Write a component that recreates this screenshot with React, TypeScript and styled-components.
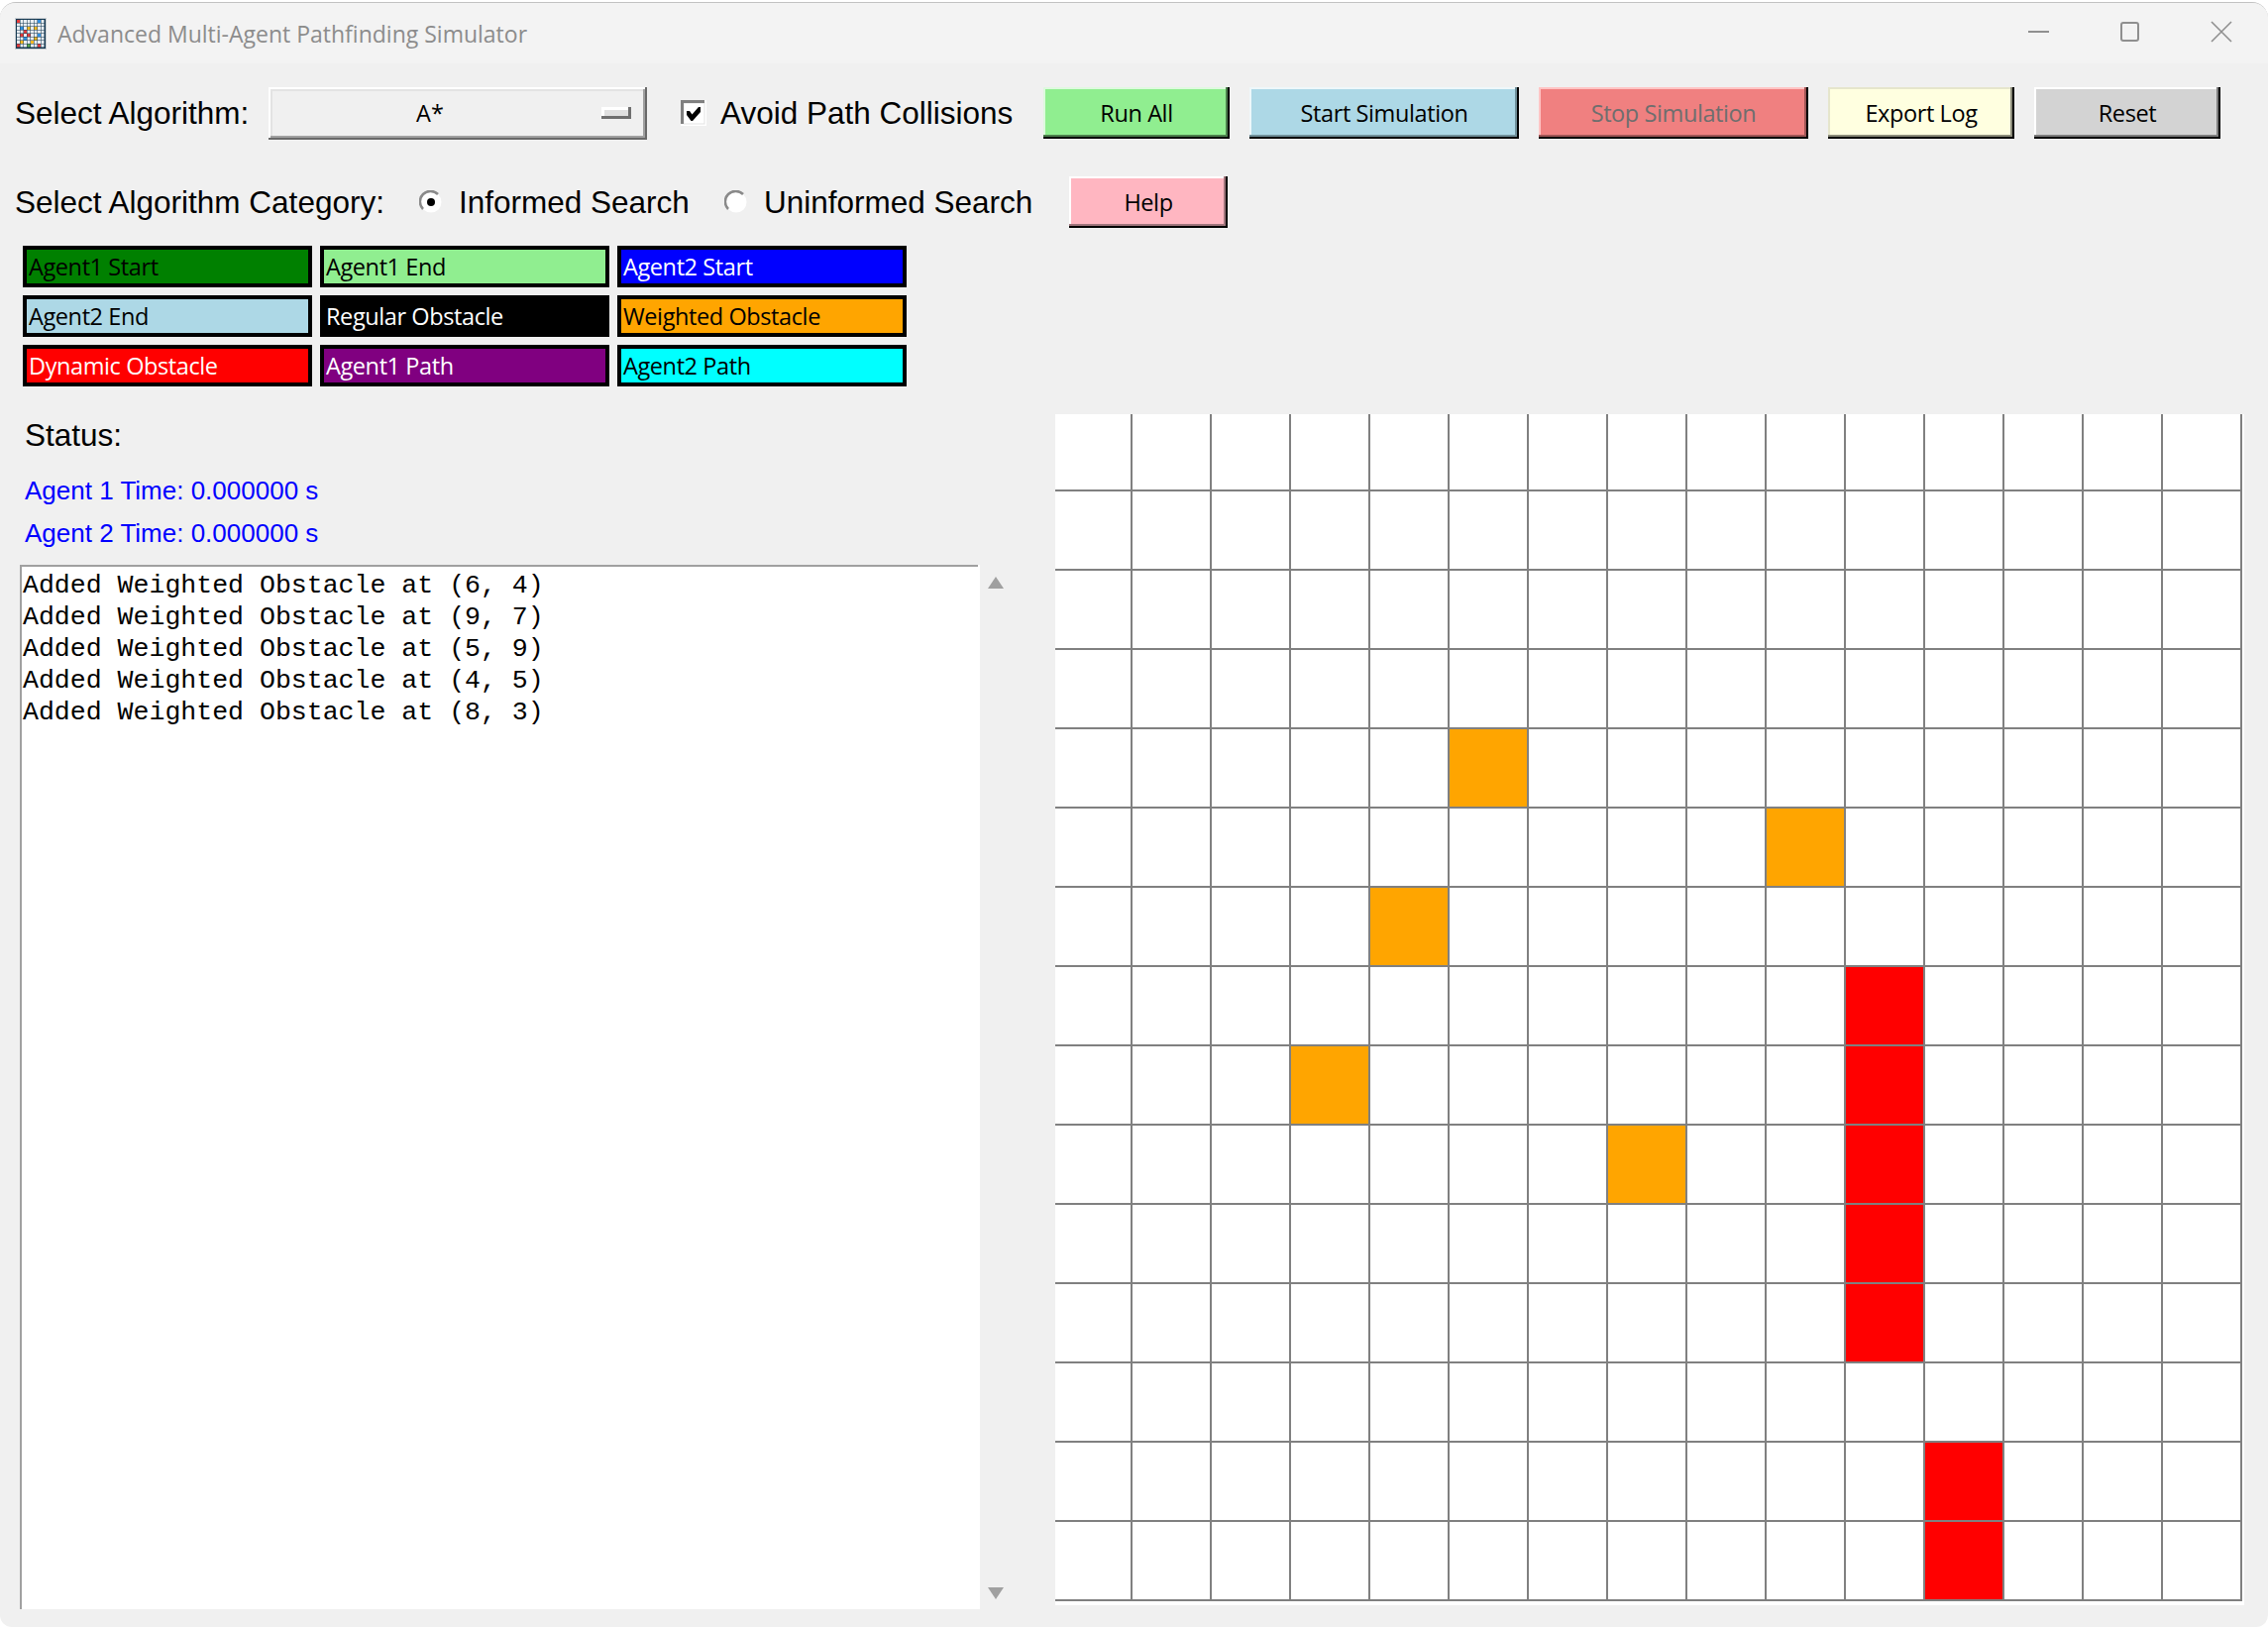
import React from "react";
import styled, { createGlobalStyle } from "styled-components";

const Global = createGlobalStyle`
  html, body { margin: 0; padding: 0; background: #fff; }
  * { box-sizing: border-box; }
`;

const Win = styled.div`
  width: 2289px;
  height: 1640px;
  margin-top: 2px;
  border-top: 1px solid #c2c2c2;
  border-radius: 16px 16px 12px 12px;
  overflow: hidden;
  background: #f0f0f0;
  display: flex;
  flex-direction: column;
`;
const TitleBar = styled.div`
  height: 61px;
  flex: none;
  background: #f3f3f3;
  display: flex;
  align-items: center;
  padding: 0 1px 0 15px;
`;
const AppIcon = styled.svg`
  width: 32px;
  height: 32px;
  flex: none;
`;
const TitleText = styled.div`
  margin-left: 11px;
  font: 23px "Open Sans", sans-serif;
  color: #8c8c8c;
`;
const Controls = styled.div`
  margin-left: auto;
  margin-bottom: 4px;
  display: flex;
`;
const Ctrl = styled.div`
  width: 92px;
  height: 40px;
  display: flex;
  align-items: center;
  justify-content: center;
`;
const Row = styled.div<{ $top: number }>`
  margin-top: ${(p) => p.$top}px;
  height: 52px;
  padding-left: 15px;
  flex: none;
  display: flex;
  align-items: center;
`;
const Label = styled.div<{ $w: number }>`
  width: ${(p) => p.$w}px;
  flex: none;
  font: 31.5px "Liberation Sans", Arial, sans-serif;
  color: #000;
  white-space: nowrap;
`;
const Combo = styled.div`
  width: 382px;
  height: 53px;
  margin-right: 34px;
  flex: none;
  background: #f0f0f0;
  box-shadow: inset -2px -2px 0 #696969, inset 2px 2px 0 #fff, inset -4px -4px 0 #a0a0a0, inset 4px 4px 0 #e3e3e3;
  display: flex;
  align-items: center;
  padding-right: 16px;
`;
const ComboValue = styled.div`
  flex: 1;
  padding-right: 10px;
  text-align: center;
  font: 23.5px "Open Sans", sans-serif;
  color: #000;
`;
const ComboMark = styled.div`
  width: 30px;
  height: 12px;
  background: #e0e0e0;
  box-shadow: inset -3px -3px 0 #6f6f6f, inset 3px 3px 0 #fff;
`;
const Check = styled.svg`
  width: 26px;
  height: 26px;
  flex: none;
  margin-right: 14px;
`;
const Radio = styled.svg`
  width: 24px;
  height: 24px;
  flex: none;
  margin-right: 16px;
`;
const Btn = styled.div<{ $w: number; $bg: string; $hi: string; $lo: string; $off?: boolean }>`
  width: ${(p) => p.$w}px;
  height: 52px;
  flex: none;
  margin-right: 20px;
  background: ${(p) => p.$bg};
  box-shadow: inset -2px -2px 0 #000, inset -4px -4px 0 ${(p) => p.$lo}, inset 2px 2px 0 ${(p) => p.$hi};
  display: flex;
  align-items: center;
  justify-content: center;
  font: 23.5px "Open Sans", sans-serif;
  letter-spacing: -0.4px;
  color: ${(p) => (p.$off ? "#6e6e6e" : "#000")};
`;
const Legend = styled.div`
  margin: 18px 0 0 23px;
  flex: none;
  display: grid;
  grid-template-columns: repeat(3, 292px);
  grid-auto-rows: 42px;
  gap: 8px;
`;
const Chip = styled.div<{ $bg: string; $fg: string }>`
  background: ${(p) => p.$bg};
  color: ${(p) => p.$fg};
  border: 4px solid #000;
  display: flex;
  align-items: center;
  padding-left: 2px;
  font: 23.5px "Open Sans", sans-serif;
  letter-spacing: -0.4px;
`;
const Main = styled.div`
  margin-top: 28px;
  display: flex;
  align-items: flex-start;
`;
const Left = styled.div`
  width: 1065px;
  flex: none;
  padding-left: 20px;
`;
const Status = styled.div`
  height: 40px;
  margin: 0 0 15px 5px;
  font: 31.5px/42px "Liberation Sans", Arial, sans-serif;
  color: #000;
`;
const AgentTime = styled.div`
  height: 43px;
  margin-left: 5px;
  font: 26px/45px "Liberation Sans", Arial, sans-serif;
  color: #0000ff;
`;
const LogBox = styled.div`
  margin-top: 11px;
  height: 1054px;
  display: flex;
`;
const LogText = styled.div`
  width: 969px;
  border-left: 2px solid #a0a0a0;
  background: linear-gradient(#a0a0a0, #a0a0a0) 0 0 / 965px 2px no-repeat, #fff;
  padding: 5px 0 0 1px;
  font: 26.55px/32px "Liberation Mono", "Courier New", monospace;
  color: #000;
  white-space: pre;
`;
const Scroll = styled.div`
  flex: 1;
  display: flex;
  flex-direction: column;
  justify-content: space-between;
  padding: 12px 0 10px 8px;
`;
const Arrow = styled.svg`
  width: 16px;
  height: 12px;
  display: block;
`;
const Board = styled.div`
  width: 1200px;
  height: 1202px;
  flex: none;
  background: #fff;
  display: grid;
  grid-template-columns: 78px repeat(14, 80px);
  grid-template-rows: 78px repeat(14, 80px);
  align-content: start;
`;
const Cell = styled.div<{ $fill: string }>`
  background: ${(p) => p.$fill};
  border-right: 2px solid #808080;
  border-bottom: 2px solid #808080;
`;

const ICON_COLORS: Record<string, string> = {
  "0,0": "#e23b3b", "7,0": "#e23b3b", "2,1": "#2f8fe0", "4,1": "#e23b3b", "6,1": "#f5b921",
  "3,2": "#e23b3b", "5,2": "#2f8fe0", "7,3": "#5aa84a", "4,3": "#e23b3b", "2,3": "#f5b921",
  "6,4": "#f5b921", "2,5": "#f5b921", "5,5": "#f5b921", "0,6": "#2f8fe0", "4,6": "#2f8fe0", "7,6": "#e23b3b",
};

const orange = ["4,5", "5,9", "6,4", "8,3", "9,7"];
const red = ["7,10", "8,10", "9,10", "10,10", "11,10", "13,11", "14,11"];
const cells: string[] = [];
for (let r = 0; r < 15; r++) {
  for (let c = 0; c < 15; c++) {
    const k = `${r},${c}`;
    cells.push(orange.includes(k) ? "#ffa500" : red.includes(k) ? "#ff0000" : "#ffffff");
  }
}

const legend = [
  ["Agent1 Start", "#008000", "#000"],
  ["Agent1 End", "#90ee90", "#000"],
  ["Agent2 Start", "#0000ff", "#fff"],
  ["Agent2 End", "#add8e6", "#000"],
  ["Regular Obstacle", "#000000", "#fff"],
  ["Weighted Obstacle", "#ffa500", "#000"],
  ["Dynamic Obstacle", "#ff0000", "#fff"],
  ["Agent1 Path", "#800080", "#fff"],
  ["Agent2 Path", "#00ffff", "#000"],
];

const log = [
  "Added Weighted Obstacle at (6, 4)",
  "Added Weighted Obstacle at (9, 7)",
  "Added Weighted Obstacle at (5, 9)",
  "Added Weighted Obstacle at (4, 5)",
  "Added Weighted Obstacle at (8, 3)",
].join("\n");

function GridIcon() {
  const squares = [];
  for (let y = 0; y < 8; y++) {
    for (let x = 0; x < 8; x++) {
      squares.push(
        <rect key={`${x}-${y}`} x={2 + x * 3.5} y={2 + y * 3.5} width={3} height={3} fill={ICON_COLORS[`${y},${x}`] ?? "#e9eef2"} />
      );
    }
  }
  return (
    <AppIcon viewBox="0 0 32 32">
      <rect width="32" height="32" fill="#c9ced2" />
      <rect x="1" y="1" width="30" height="30" fill="#173a52" />
      {squares}
    </AppIcon>
  );
}

export default function App() {
  return (
    <Win>
      <Global />
      <TitleBar>
        <GridIcon />
        <TitleText>Advanced Multi-Agent Pathfinding Simulator</TitleText>
        <Controls>
          <Ctrl>
            <svg width="22" height="22" viewBox="0 0 22 22"><path d="M0 11h21" stroke="#8f8f8f" strokeWidth="2" /></svg>
          </Ctrl>
          <Ctrl>
            <svg width="22" height="22" viewBox="0 0 22 22"><rect x="2" y="2" width="17" height="18" rx="2" fill="none" stroke="#8f8f8f" strokeWidth="2" /></svg>
          </Ctrl>
          <Ctrl>
            <svg width="22" height="22" viewBox="0 0 22 22"><path d="M1 1l20 20M21 1L1 21" stroke="#8f8f8f" strokeWidth="1.6" /></svg>
          </Ctrl>
        </Controls>
      </TitleBar>

      <Row $top={24}>
        <Label $w={256}>Select Algorithm:</Label>
        <Combo>
          <ComboValue>A*</ComboValue>
          <ComboMark />
        </Combo>
        <Check viewBox="0 0 26 26">
          <rect width="26" height="26" fill="#fff" />
          <rect x="3" y="3" width="21" height="21" fill="#fff" stroke="#e3e3e3" strokeWidth="1" />
          <path d="M0 0h24v3H3v21H0z" fill="#808080" />
          <path d="M6 11h3l2.5 3.5L18 7h2v5l-8 9h-1.5L6 15z" fill="#000" />
        </Check>
        <Label $w={326}>Avoid Path Collisions</Label>
        <Btn $w={188} $bg="#90ee90" $hi="#def9de" $lo="#4c7f4c">Run All</Btn>
        <Btn $w={272} $bg="#add8e6" $hi="#eef7fa" $lo="#70909a">Start Simulation</Btn>
        <Btn $w={272} $bg="#f08080" $hi="#ffc4c4" $lo="#a05555" $off>Stop Simulation</Btn>
        <Btn $w={188} $bg="#ffffe0" $hi="#e6e6cc" $lo="#8c8c7a">Export Log</Btn>
        <Btn $w={188} $bg="#d3d3d3" $hi="#ffffff" $lo="#7d7d7d">Reset</Btn>
      </Row>

      <Row $top={38}>
        <Label $w={408}>Select Algorithm Category:</Label>
        <Radio viewBox="0 0 24 24">
          <circle cx="12" cy="12" r="10.5" fill="#fff" />
          <path d="M4 19A10.5 10.5 0 0 1 19 4" fill="none" stroke="#8a8a8a" strokeWidth="2.5" />
          <circle cx="12" cy="12" r="4" fill="#000" />
        </Radio>
        <Label $w={268}>Informed Search</Label>
        <Radio viewBox="0 0 24 24">
          <circle cx="12" cy="12" r="10.5" fill="#fff" />
          <path d="M4 19A10.5 10.5 0 0 1 19 4" fill="none" stroke="#8a8a8a" strokeWidth="2.5" />
        </Radio>
        <Label $w={308}>Uninformed Search</Label>
        <Btn $w={160} $bg="#ffb6c1" $hi="#ffffff" $lo="#a0757c">Help</Btn>
      </Row>

      <Legend>
        {legend.map(([t, bg, fg]) => (
          <Chip key={t} $bg={bg} $fg={fg}>{t}</Chip>
        ))}
      </Legend>

      <Main>
        <Left>
          <Status>Status:</Status>
          <AgentTime>Agent 1 Time: 0.000000 s</AgentTime>
          <AgentTime>Agent 2 Time: 0.000000 s</AgentTime>
          <LogBox>
            <LogText>{log}</LogText>
            <Scroll>
              <Arrow viewBox="0 0 16 12"><path d="M8 0L16 12H0z" fill="#a0a0a0" /></Arrow>
              <Arrow viewBox="0 0 16 12"><path d="M0 0H16L8 12z" fill="#a0a0a0" /></Arrow>
            </Scroll>
          </LogBox>
        </Left>
        <Board>
          {cells.map((c, i) => (
            <Cell key={i} $fill={c} />
          ))}
        </Board>
      </Main>
    </Win>
  );
}
